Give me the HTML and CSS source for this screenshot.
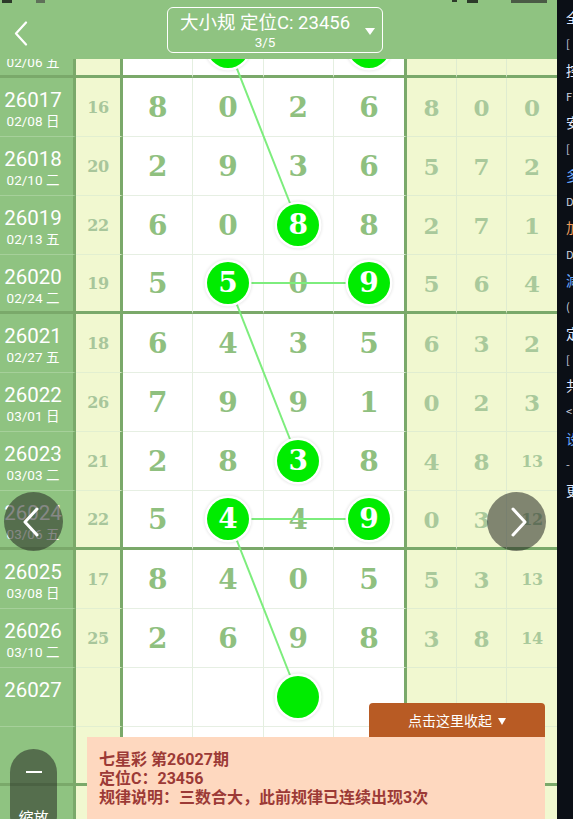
FILE: index.html
```html
<!DOCTYPE html>
<html lang="zh">
<head>
<meta charset="utf-8">
<title>七星彩 规律</title>
<link rel="stylesheet" href="styles.css">
</head>
<body>
<div class="screen">
  <div class="app">
    <div class="status">
      <span class="sb sb1"></span><span class="sb sb2"></span><span class="sb sb3"></span><span class="sb sb4"></span><span class="sb sb5"></span>
    </div>
    <header class="topbar">
      <div class="back">
        <svg width="14" height="26" viewBox="0 0 14 26"><path d="M12 1.5 L2 12.5 L12 23.5" fill="none" stroke="#fff" stroke-width="2.2" stroke-linecap="round" stroke-linejoin="round"/></svg>
      </div>
      <div class="picker">
        <div class="picker-text">
          <div class="picker-title">大小规 定位C: 23456</div>
          <div class="picker-sub">3/5</div>
        </div>
        <span class="picker-caret"></span>
      </div>
    </header>

    <div class="viewport">
      <div class="table">
        <div class="row end">
          <div class="c-date"><div class="num">26016</div><div class="day">02/06 五</div></div>
          <div class="c-sum">21</div>
          <div class="c-d">3</div><div class="c-d"><span class="ball">6</span></div><div class="c-d">2</div><div class="c-d"><span class="ball">9</span></div>
          <div class="c-y">4</div><div class="c-y">2</div><div class="c-y">9</div>
        </div>

        <div class="row">
          <div class="c-date"><div class="num">26017</div><div class="day">02/08 日</div></div>
          <div class="c-sum">16</div>
          <div class="c-d">8</div><div class="c-d">0</div><div class="c-d">2</div><div class="c-d">6</div>
          <div class="c-y">8</div><div class="c-y">0</div><div class="c-y">0</div>
        </div>
        <div class="row">
          <div class="c-date"><div class="num">26018</div><div class="day">02/10 二</div></div>
          <div class="c-sum">20</div>
          <div class="c-d">2</div><div class="c-d">9</div><div class="c-d">3</div><div class="c-d">6</div>
          <div class="c-y">5</div><div class="c-y">7</div><div class="c-y">2</div>
        </div>
        <div class="row">
          <div class="c-date"><div class="num">26019</div><div class="day">02/13 五</div></div>
          <div class="c-sum">22</div>
          <div class="c-d">6</div><div class="c-d">0</div><div class="c-d"><span class="ball">8</span></div><div class="c-d">8</div>
          <div class="c-y">2</div><div class="c-y">7</div><div class="c-y">1</div>
        </div>
        <div class="row end">
          <div class="c-date"><div class="num">26020</div><div class="day">02/24 二</div></div>
          <div class="c-sum">19</div>
          <div class="c-d">5</div><div class="c-d"><span class="ball">5</span></div><div class="c-d">0</div><div class="c-d"><span class="ball">9</span></div>
          <div class="c-y">5</div><div class="c-y">6</div><div class="c-y">4</div>
        </div>

        <div class="row">
          <div class="c-date"><div class="num">26021</div><div class="day">02/27 五</div></div>
          <div class="c-sum">18</div>
          <div class="c-d">6</div><div class="c-d">4</div><div class="c-d">3</div><div class="c-d">5</div>
          <div class="c-y">6</div><div class="c-y">3</div><div class="c-y">2</div>
        </div>
        <div class="row">
          <div class="c-date"><div class="num">26022</div><div class="day">03/01 日</div></div>
          <div class="c-sum">26</div>
          <div class="c-d">7</div><div class="c-d">9</div><div class="c-d">9</div><div class="c-d">1</div>
          <div class="c-y">0</div><div class="c-y">2</div><div class="c-y">3</div>
        </div>
        <div class="row">
          <div class="c-date"><div class="num">26023</div><div class="day">03/03 二</div></div>
          <div class="c-sum">21</div>
          <div class="c-d">2</div><div class="c-d">8</div><div class="c-d"><span class="ball">3</span></div><div class="c-d">8</div>
          <div class="c-y">4</div><div class="c-y">8</div><div class="c-y small">13</div>
        </div>
        <div class="row end">
          <div class="c-date"><div class="num">26024</div><div class="day">03/06 五</div></div>
          <div class="c-sum">22</div>
          <div class="c-d">5</div><div class="c-d"><span class="ball">4</span></div><div class="c-d">4</div><div class="c-d"><span class="ball">9</span></div>
          <div class="c-y">0</div><div class="c-y">3</div><div class="c-y small">12</div>
        </div>

        <div class="row">
          <div class="c-date"><div class="num">26025</div><div class="day">03/08 日</div></div>
          <div class="c-sum">17</div>
          <div class="c-d">8</div><div class="c-d">4</div><div class="c-d">0</div><div class="c-d">5</div>
          <div class="c-y">5</div><div class="c-y">3</div><div class="c-y small">13</div>
        </div>
        <div class="row">
          <div class="c-date"><div class="num">26026</div><div class="day">03/10 二</div></div>
          <div class="c-sum">25</div>
          <div class="c-d">2</div><div class="c-d">6</div><div class="c-d">9</div><div class="c-d">8</div>
          <div class="c-y">3</div><div class="c-y">8</div><div class="c-y small">14</div>
        </div>
        <div class="row">
          <div class="c-date"><div class="num">26027</div></div>
          <div class="c-sum"></div>
          <div class="c-d"></div><div class="c-d"></div><div class="c-d"><span class="ball"></span></div><div class="c-d"></div>
          <div class="c-y"></div><div class="c-y"></div><div class="c-y"></div>
        </div>
        <div class="row end">
          <div class="c-date"></div>
          <div class="c-sum"></div>
          <div class="c-d"></div><div class="c-d"></div><div class="c-d"></div><div class="c-d"></div>
          <div class="c-y"></div><div class="c-y"></div><div class="c-y"></div>
        </div>
        <div class="row">
          <div class="c-date"></div>
          <div class="c-sum"></div>
          <div class="c-d"></div><div class="c-d"></div><div class="c-d"></div><div class="c-d"></div>
          <div class="c-y"></div><div class="c-y"></div><div class="c-y"></div>
        </div>

        <svg class="links" width="557" height="826" viewBox="0 0 557 826">
          <g stroke="#7ded7d" stroke-width="2" fill="none">
            <path d="M228.4 28 L298.6 206"/>
            <path d="M228.4 28 L368.9 28"/>
            <path d="M228.4 264 L368.9 264"/>
            <path d="M228.4 264 L298.6 442"/>
            <path d="M228.4 500 L368.9 500"/>
            <path d="M228.4 500 L298.6 678"/>
          </g>
        </svg>
      </div>
    </div>

    <button class="nav nav-prev" type="button">
      <svg width="18" height="30" viewBox="0 0 18 30"><path d="M15 2 L3 15 L15 28" fill="none" stroke="#fff" stroke-width="3" stroke-linecap="round" stroke-linejoin="round"/></svg>
    </button>
    <button class="nav nav-next" type="button">
      <svg width="18" height="30" viewBox="0 0 18 30"><path d="M3 2 L15 15 L3 28" fill="none" stroke="#fff" stroke-width="3" stroke-linecap="round" stroke-linejoin="round"/></svg>
    </button>

    <div class="zoom-btn">
      <span class="zoom-bar"></span>
      <span class="zoom-label">缩放</span>
    </div>

    <div class="sheet">
      <div class="sheet-tab">点击这里收起<span class="tab-caret"></span></div>
      <div class="sheet-body">
        <div>七星彩 第26027期</div>
        <div>定位C：23456</div>
        <div>规律说明：三数合大，此前规律已连续出现3次</div>
      </div>
    </div>
  </div>

  <div class="side">
    <div class="side-line">全</div>
    <div class="side-line sm">[</div>
    <div class="side-line">控</div>
    <div class="side-line sm">F</div>
    <div class="side-line">安</div>
    <div class="side-line sm">[</div>
    <div class="side-line blue">多</div>
    <div class="side-line sm">D</div>
    <div class="side-line orange">加</div>
    <div class="side-line sm">D</div>
    <div class="side-line blue">減</div>
    <div class="side-line sm">(</div>
    <div class="side-line">定</div>
    <div class="side-line sm">[</div>
    <div class="side-line">共</div>
    <div class="side-line sm">&lt;</div>
    <div class="side-line blue">设</div>
    <div class="side-line sm">-</div>
    <div class="side-line">更</div>
  </div>
</div>
</body>
</html>
```

FILE: styles.css
```css
* { box-sizing: border-box; }

html, body {
  margin: 0;
  padding: 0;
  background: #0b0f16;
}

.screen {
  display: flex;
  width: 573px;
  height: 819px;
  overflow: hidden;
}

.app {
  position: relative;
  width: 557px;
  height: 819px;
  flex: 0 0 557px;
  display: flex;
  flex-direction: column;
  overflow: hidden;
  background: #ffffff;
}

/* status bar remnants */
.status {
  position: absolute;
  top: 0;
  left: 0;
  width: 557px;
  height: 4px;
  z-index: 6;
}
.sb {
  position: absolute;
  top: 0;
  height: 3px;
  background: #2d3a2a;
}
.sb1 { left: 2px; width: 10px; }
.sb2 { left: 36px; width: 9px; background: #5f7059; }
.sb3 { left: 452px; width: 5px; height: 2px; }
.sb4 { left: 467px; width: 11px; }
.sb5 { left: 511px; width: 36px; background: #4a5a45; }

/* top bar */
.topbar {
  flex: 0 0 59px;
  height: 59px;
  background: #8fc381;
  display: grid;
  grid-template-columns: 167px 216px 1fr;
  align-items: start;
  position: relative;
  z-index: 4;
}
.back {
  padding: 21px 0 0 14px;
  height: 59px;
}
.back svg { display: block; }

.picker {
  margin-top: 7px;
  height: 46px;
  border: 1.5px solid #ffffff;
  border-radius: 6px;
  position: relative;
  display: flex;
  justify-content: center;
  padding-right: 20px;
  color: #ffffff;
  font-family: Roboto, "Noto Sans CJK SC", sans-serif;
}
.picker-text {
  text-align: center;
  padding-top: 4px;
}
.picker-title {
  font-size: 18.5px;
  line-height: 22px;
  white-space: nowrap;
}
.picker-sub {
  font-size: 13.5px;
  line-height: 16px;
}
.picker-caret {
  position: absolute;
  right: 7px;
  top: 20px;
  width: 0;
  height: 0;
  border-left: 5px solid transparent;
  border-right: 5px solid transparent;
  border-top: 7px solid #ffffff;
}

/* table */
.viewport {
  flex: 1 1 auto;
  overflow: hidden;
  position: relative;
}
.table {
  position: relative;
  margin-top: -40px;
}
.row {
  display: grid;
  grid-template-columns: 76px 47px 70.25px 70.25px 70.25px 73.25px 50px 50px 50px;
  height: 59px;
}
.row > div {
  height: 59px;
}

.c-date {
  background: #8fc381;
  border-right: 3px solid #7aa96a;
  border-bottom: 1px solid #a6d09a;
  padding: 10px 7px 0 0;
  text-align: center;
  color: #ffffff;
  font-family: Roboto, "Noto Sans CJK SC", sans-serif;
}
.c-date .num {
  font-size: 20.5px;
  line-height: 24px;
}
.c-date .day {
  font-size: 13.5px;
  line-height: 18px;
}

.c-sum {
  background: #f1f8d0;
  border-right: 3px solid #7aa96a;
  border-bottom: 1px solid #e2efd0;
  display: flex;
  align-items: center;
  justify-content: center;
  font-family: "DejaVu Serif", serif;
  font-weight: 700;
  font-size: 16px;
  letter-spacing: -0.5px;
  color: #a8c69b;
}

.c-d {
  background: #ffffff;
  border-right: 1px solid #e4efe0;
  border-bottom: 1px solid #e6efe3;
  display: flex;
  align-items: center;
  justify-content: center;
  font-family: "DejaVu Serif", serif;
  font-weight: 700;
  font-size: 28px;
  color: #8fc07f;
}
.c-d:nth-child(6) {
  border-right: 3px solid #7aa96a;
}

.c-y {
  background: #f1f8d0;
  border-right: 1px solid #dfecd0;
  border-bottom: 1px solid #e0edd0;
  display: flex;
  align-items: center;
  justify-content: center;
  font-family: "DejaVu Serif", serif;
  font-weight: 700;
  font-size: 23px;
  color: #a9c99b;
}
.c-y:last-child { border-right: 0; }
.c-y.small { font-size: 16px; letter-spacing: -0.5px; }

.row.end > div {
  border-bottom: 3px solid #7aa96a;
}

.ball {
  position: relative;
  z-index: 2;
  width: 42px;
  height: 42px;
  border-radius: 50%;
  background: #00ec00;
  color: #ffffff;
  display: flex;
  align-items: center;
  justify-content: center;
  box-shadow: 0 0 0 2.5px #ffffff, 0 0 3px 3px rgba(0, 0, 0, 0.10);
  line-height: 1;
}

.links {
  position: absolute;
  left: 0;
  top: 0;
  z-index: 1;
  pointer-events: none;
}

/* floating nav */
.nav {
  position: absolute;
  top: 492px;
  width: 59px;
  height: 59px;
  border-radius: 50%;
  border: 0;
  padding: 0;
  background: rgba(40, 42, 38, 0.56);
  display: flex;
  align-items: center;
  justify-content: center;
  z-index: 5;
}
.nav svg { display: block; }
.nav-prev { left: 4px; }
.nav-prev svg { margin-left: -5px; }
.nav-next { left: 487px; }
.nav-next svg { margin-left: 5px; }

.zoom-btn {
  position: absolute;
  left: 10px;
  top: 749px;
  width: 47px;
  height: 90px;
  border-radius: 23.5px;
  background: rgba(40, 42, 38, 0.56);
  display: flex;
  flex-direction: column;
  align-items: center;
  z-index: 5;
}
.zoom-bar {
  margin-top: 22px;
  width: 16px;
  height: 2px;
  background: #ffffff;
}
.zoom-label {
  margin-top: 35px;
  font-family: "Noto Sans CJK SC", sans-serif;
  font-size: 15px;
  line-height: 18px;
  color: #ffffff;
}

/* bottom sheet */
.sheet {
  position: absolute;
  left: 87px;
  top: 703px;
  width: 458px;
  height: 140px;
  display: flex;
  flex-direction: column;
  z-index: 5;
}
.sheet-tab {
  align-self: flex-end;
  width: 176px;
  height: 34px;
  background: #b85b24;
  border-radius: 4px 4px 0 0;
  color: #ffffff;
  font-family: "Noto Sans CJK SC", sans-serif;
  font-size: 14px;
  line-height: 34px;
  text-align: center;
}
.tab-caret {
  display: inline-block;
  margin-left: 6px;
  width: 0;
  height: 0;
  border-left: 4.5px solid transparent;
  border-right: 4.5px solid transparent;
  border-top: 7px solid #ffffff;
  vertical-align: 1px;
}
.sheet-body {
  flex: 1 1 auto;
  background: #fed8bf;
  padding: 13px 12px 0 12px;
  color: #9c3a36;
  font-family: Roboto, "Noto Sans CJK SC", sans-serif;
  font-weight: 700;
  font-size: 16px;
  line-height: 19px;
}

/* right dark strip */
.side {
  flex: 0 0 16px;
  width: 16px;
  height: 819px;
  background: #0b0f16;
  overflow: hidden;
  padding: 4px 0 0 9px;
  font-family: "Noto Sans CJK SC", sans-serif;
  color: #e4ecff;
}
.side-line {
  height: 26.3px;
  line-height: 26.3px;
  font-size: 14px;
  white-space: nowrap;
}
.side-line.sm {
  font-size: 11px;
  color: #cfd6e0;
}
.side-line.blue { color: #6aa9ff; }
.side-line.orange { color: #f0a060; }
```
